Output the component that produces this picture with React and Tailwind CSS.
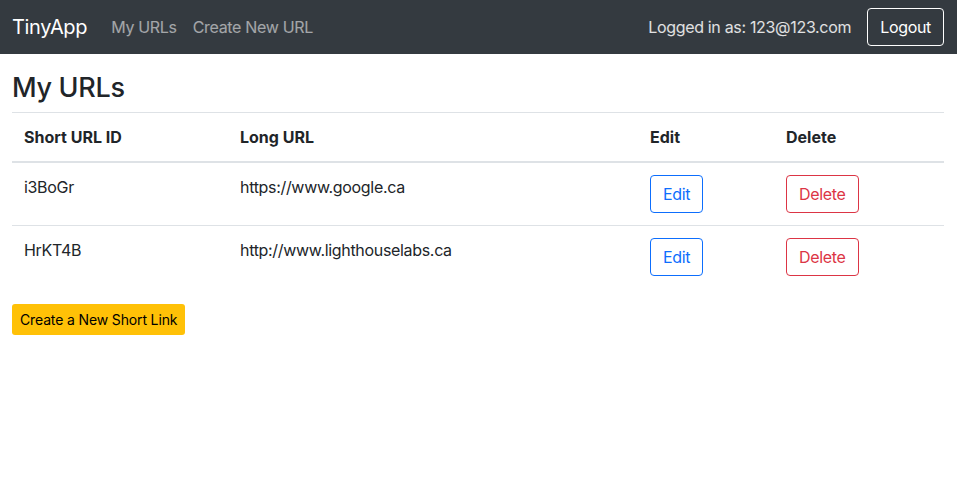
import React from "react";

const urls = [
  { id: "i3BoGr", longURL: "https://www.google.ca" },
  { id: "HrKT4B", longURL: "http://www.lighthouselabs.ca" },
];

const App = () => {
  return (
    <div className="min-h-screen bg-white text-[#212529] font-['Inter',sans-serif] tracking-[-0.02em]">
      <nav className="bg-[#343a40] h-[54px] pl-3 pr-[13px] flex items-center justify-between">
        <div className="flex items-center">
          <span className="text-white text-[20px] mr-4">TinyApp</span>
          <a className="text-white/55 text-base px-2">My URLs</a>
          <a className="text-white/55 text-base px-2">Create New URL</a>
        </div>
        <div className="flex items-center">
          <span className="text-white/85 text-base mr-4">
            Logged in as: 123@123.com
          </span>
          <button className="text-white text-base border border-white rounded-[4px] h-[38px] px-3">
            Logout
          </button>
        </div>
      </nav>

      <main className="pl-3 pr-[13px]">
        <h3 className="text-[27px] leading-[1.2] font-medium pt-[18px] pb-[8px]">
          My URLs
        </h3>
        <table className="w-full text-base border-t border-[#dee2e6] table-fixed">
          <thead>
            <tr className="border-b-2 border-[#dee2e6]">
              <th className="w-[216px] p-3 text-left font-bold tracking-normal">Short URL ID</th>
              <th className="w-[410px] p-3 text-left font-bold tracking-normal">Long URL</th>
              <th className="w-[136px] p-3 text-left font-bold tracking-normal">Edit</th>
              <th className="p-3 text-left font-bold tracking-normal">Delete</th>
            </tr>
          </thead>
          <tbody>
            {urls.map((url, i) => (
              <tr
                key={url.id}
                className={i < urls.length - 1 ? "border-b border-[#dee2e6]" : ""}
              >
                <td className="p-3 align-top">{url.id}</td>
                <td className="p-3 align-top">{url.longURL}</td>
                <td className="p-3 align-top">
                  <button className="h-[38px] px-3 border border-[#0d6efd] text-[#0d6efd] rounded-[4px]">
                    Edit
                  </button>
                </td>
                <td className="p-3 align-top">
                  <button className="h-[38px] px-3 border border-[#dc3545] text-[#dc3545] rounded-[4px]">
                    Delete
                  </button>
                </td>
              </tr>
            ))}
          </tbody>
        </table>
        <button className="mt-4 h-[31px] px-2 bg-[#ffc107] text-black text-sm tracking-[-0.01em] rounded-[3px]">
          Create a New Short Link
        </button>
      </main>
    </div>
  );
};

export default App;
